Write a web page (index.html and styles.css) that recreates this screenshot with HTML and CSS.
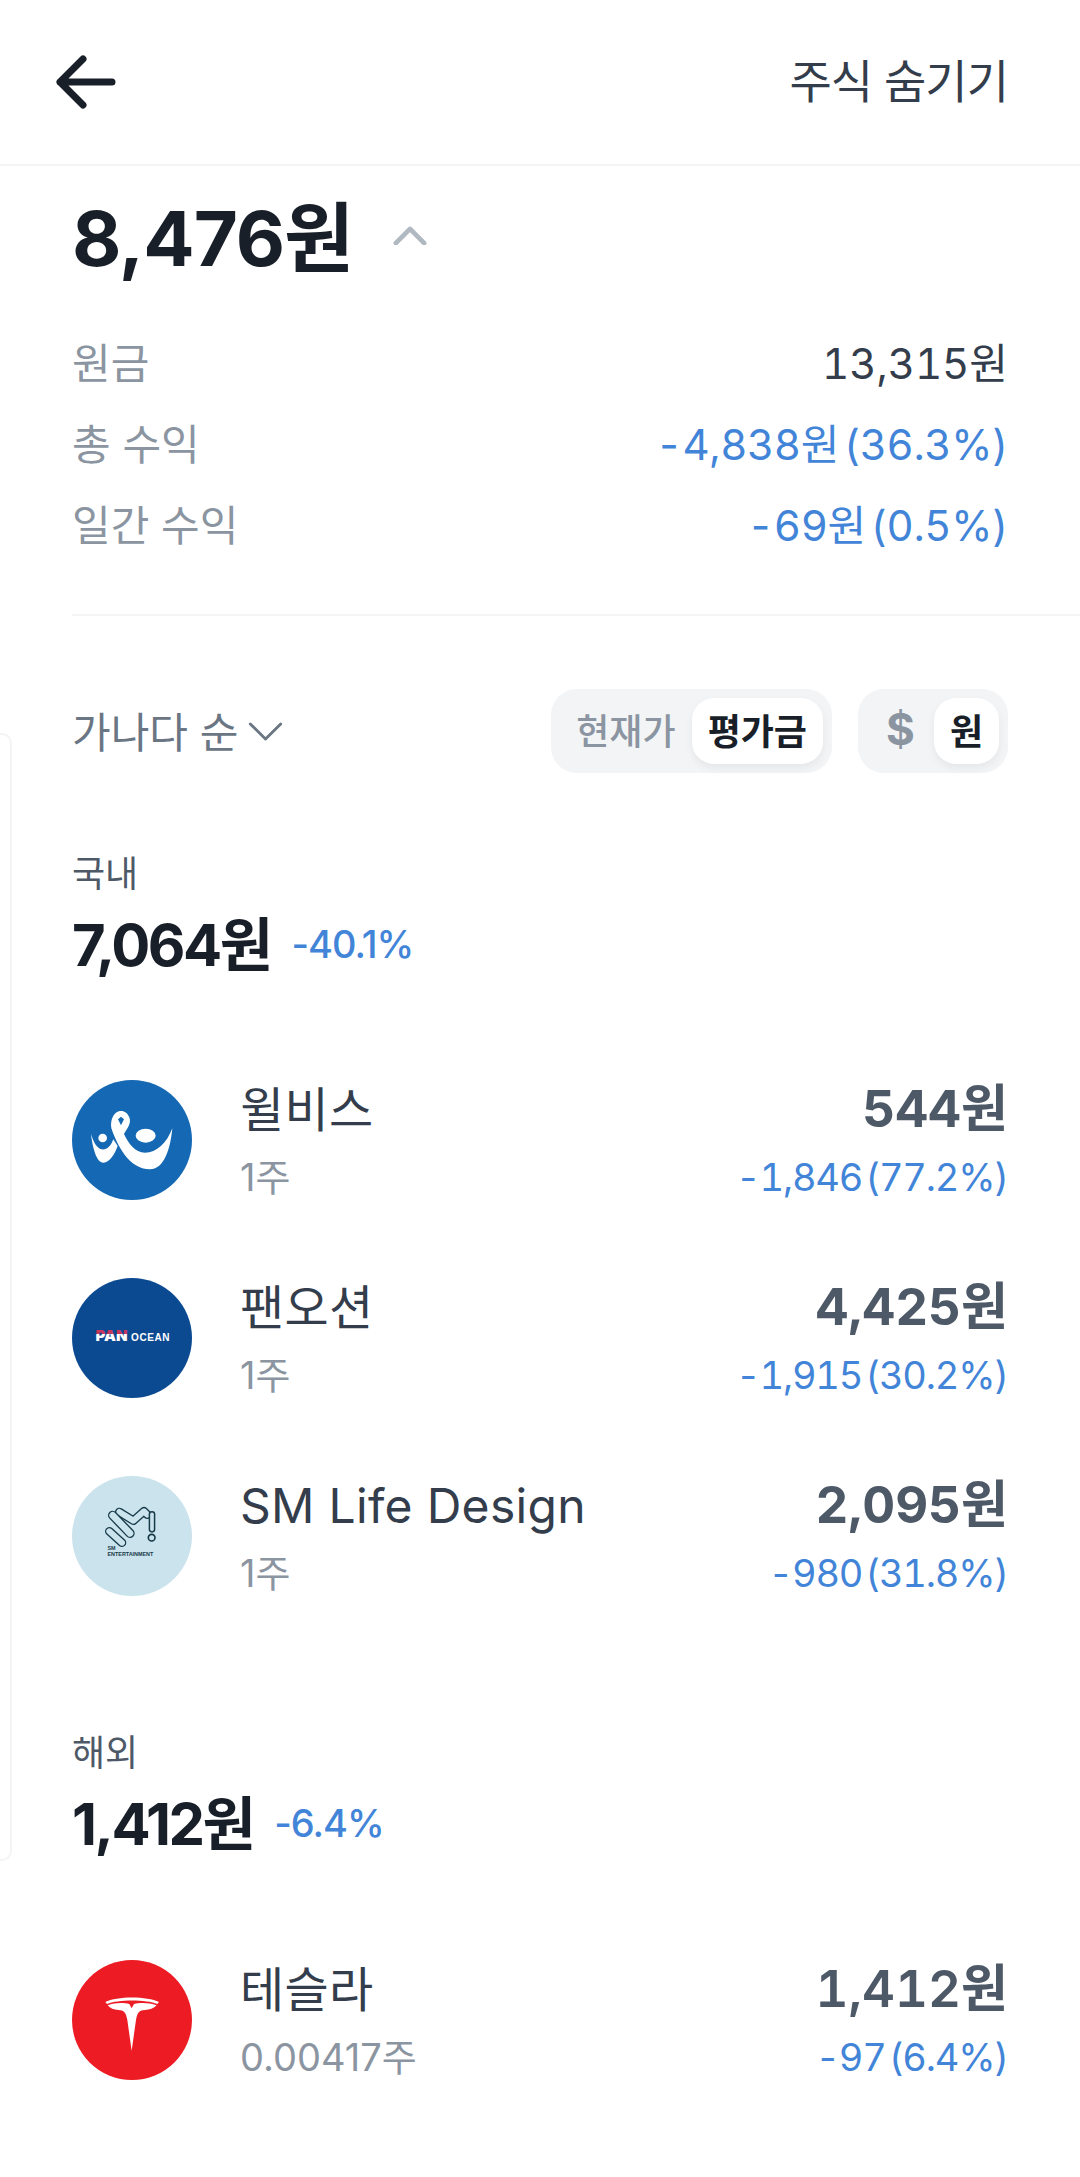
FILE: index.html
```html
<!DOCTYPE html>
<html lang="ko">
<head>
    <meta charset="UTF-8">
    <meta name="viewport" content="width=device-width, initial-scale=1.0">
    <title>주식 숨기기</title>
    <link rel="stylesheet" href="styles.css">
</head>
<body>

<div class="side-card"></div>

<header class="top-bar">
    <svg class="back-icon" viewBox="0 0 60 54" width="60" height="54">
        <path d="M27 4 L4 27 L27 50 M4 27 H56" fill="none" stroke="#191f28" stroke-width="7" stroke-linecap="round" stroke-linejoin="round"/>
    </svg>
    <span class="hide-link">주식 숨기기</span>
</header>

<section class="summary">
    <div class="total-row">
        <span class="total">8,476원</span>
        <svg class="up-icon" viewBox="0 0 36 20" width="34" height="19">
            <path d="M3 18 L18 3 L33 18" fill="none" stroke="#b0b8c1" stroke-width="5" stroke-linecap="round" stroke-linejoin="round"/>
        </svg>
    </div>
    <div class="summary-row">
        <span class="summary-label">원금</span>
        <span class="summary-value">13,315원</span>
    </div>
    <div class="summary-row">
        <span class="summary-label">총 수익</span>
        <span class="summary-value blue">-4,838원 (36.3%)</span>
    </div>
    <div class="summary-row">
        <span class="summary-label">일간 수익</span>
        <span class="summary-value blue">-69원 (0.5%)</span>
    </div>
</section>

<hr class="divider">

<div class="sort-bar">
    <div class="sort-select">
        <span class="sort-text">가나다 순</span>
        <svg viewBox="0 0 36 20" width="35" height="19">
            <path d="M2 2 L18 18 L34 2" fill="none" stroke="#6b7684" stroke-width="3" stroke-linecap="round" stroke-linejoin="round"/>
        </svg>
    </div>
    <div class="toggles">
        <div class="toggle">
            <span class="toggle-item">현재가</span>
            <span class="toggle-item active">평가금</span>
        </div>
        <div class="toggle">
            <span class="toggle-item dollar">$</span>
            <span class="toggle-item active won">원</span>
        </div>
    </div>
</div>

<section class="group">
    <div class="group-label">국내</div>
    <div class="group-head">
        <span class="group-value">7,064원</span>
        <span class="group-rate">-40.1%</span>
    </div>

    <div class="stock">
        <svg class="logo" viewBox="0 0 120 120">
            <circle cx="60" cy="60" r="60" fill="#1569b4"/>
            <g transform="translate(-22 -20) scale(.3333)" fill="#fff">
                <path d="M213 153 C190 153 178 185 186 210 C200 250 235 328 300 328 C345 328 362 260 367 205 C350 250 320 278 285 278 C255 278 235 250 222 222 C232 205 245 190 238 172 C233 160 225 153 213 153 Z"/>
                <path d="M213 170 L222 178 L213 196 L204 178 Z" fill="#1569b4"/>
                <path d="M123 222 C128 265 140 308 160 308 C180 308 195 280 203 258 L190 238 C182 260 170 270 155 268 C140 265 130 245 123 222 Z"/>
                <circle cx="158" cy="234" r="13"/>
                <ellipse cx="287" cy="227" rx="30" ry="21"/>
            </g>
        </svg>
        <div class="stock-info">
            <div class="stock-name">윌비스</div>
            <div class="stock-qty">1주</div>
        </div>
        <div class="stock-price">
            <div class="price strong">544원</div>
            <div class="profit">-1,846 (77.2%)</div>
        </div>
    </div>

    <div class="stock">
        <svg class="logo" viewBox="0 0 120 120">
            <defs>
                <linearGradient id="pan-fill" x1="0" y1="0" x2="0" y2="1">
                    <stop offset="0.42" stop-color="#c9365f"/>
                    <stop offset="0.42" stop-color="#fff"/>
                </linearGradient>
            </defs>
            <circle cx="60" cy="60" r="60" fill="#0b4a91"/>
            <text class="pan-text" x="23.500" y="63" fill="url(#pan-fill)">PAN</text>
            <text class="ocean-text" x="59" y="63" fill="#fff">OCEAN</text>
        </svg>
        <div class="stock-info">
            <div class="stock-name">팬오션</div>
            <div class="stock-qty">1주</div>
        </div>
        <div class="stock-price">
            <div class="price strong">4,425원</div>
            <div class="profit">-1,915 (30.2%)</div>
        </div>
    </div>

    <div class="stock">
        <svg class="logo" viewBox="0 0 120 120">
            <circle cx="60" cy="60" r="60" fill="#cbe3ec"/>
            <g transform="translate(-22 -20) scale(.3333)" fill="none" stroke-linecap="round" stroke-linejoin="round">
                <path d="M208 168 L250 194 L282 166 L292 176" stroke="#173a4a" stroke-width="26"/>
                <path d="M208 168 L250 194 L282 166 L292 176" stroke="#cbe3ec" stroke-width="18"/>
                <path d="M188 178 L240 232" stroke="#173a4a" stroke-width="28"/>
                <path d="M188 178 L240 232" stroke="#cbe3ec" stroke-width="20"/>
                <path d="M178 226 L216 260" stroke="#173a4a" stroke-width="26"/>
                <path d="M178 226 L216 260" stroke="#cbe3ec" stroke-width="18"/>
                <path d="M306 175 V220" stroke="#173a4a" stroke-width="20"/>
                <path d="M306 175 V220" stroke="#cbe3ec" stroke-width="11"/>
                <circle cx="305" cy="245" r="10" stroke="#173a4a" stroke-width="5"/>
            </g>
            <text class="sm-text" x="35.500" y="74">SM</text>
            <text class="sm-text" x="35.500" y="80">ENTERTAINMENT</text>
        </svg>
        <div class="stock-info">
            <div class="stock-name">SM Life Design</div>
            <div class="stock-qty">1주</div>
        </div>
        <div class="stock-price">
            <div class="price strong">2,095원</div>
            <div class="profit">-980 (31.8%)</div>
        </div>
    </div>
</section>

<section class="group second">
    <div class="group-label">해외</div>
    <div class="group-head">
        <span class="group-value">1,412원</span>
        <span class="group-rate">-6.4%</span>
    </div>

    <div class="stock">
        <svg class="logo" viewBox="0 0 120 120">
            <circle cx="60" cy="60" r="60" fill="#ed1c24"/>
            <g transform="translate(-22 -20) scale(.3333)" fill="#fff">
                <path d="M166 186 C200 168 292 168 327 186 L322 192 C290 178 202 178 171 192 Z"/>
                <path d="M173 196 C195 187 222 188 238 192 L245 205 L252 192 C268 188 296 187 320 196 C312 205 298 210 285 210 C268 210 262 218 258 240 L245 332 L232 240 C228 218 222 210 205 210 C192 210 180 205 173 196 Z"/>
            </g>
        </svg>
        <div class="stock-info">
            <div class="stock-name">테슬라</div>
            <div class="stock-qty">0.00417주</div>
        </div>
        <div class="stock-price">
            <div class="price">1,412원</div>
            <div class="profit">-97 (6.4%)</div>
        </div>
    </div>
</section>

</body>
</html>
```

FILE: styles.css
```css
* {
    box-sizing: border-box;
}

body {
    position: relative;
    margin: 0;
    height: 2177px;
    overflow: hidden;
    background-color: #fff;
    color: #191f28;
    font-family: Inter, "Noto Sans CJK KR", sans-serif;
}

/* Card of the previous page peeking in from the left */
.side-card {
    position: absolute;
    left: -12px;
    top: 733px;
    width: 24px;
    height: 1128px;
    border: 2px solid #f2f4f6;
    border-radius: 10px;
}

/* Top bar */
.top-bar {
    display: flex;
    justify-content: space-between;
    align-items: center;
    height: 166px;
    padding: 0 72px 0 56px;
    border-bottom: 2px solid #f2f4f6;
}

.hide-link {
    padding-bottom: 8px;
    font-size: 46px;
    color: #333d4b;
    letter-spacing: -1px;
}

/* Summary */
.summary {
    padding: 0 72px;
}

.total-row {
    display: flex;
    align-items: center;
    gap: 40px;
    height: 134px;
    margin-bottom: 20px;
}

.total {
    font-size: 76px;
    font-weight: 700;
    letter-spacing: -1px;
}

.up-icon {
    margin-top: 4px;
}

.summary-row {
    display: flex;
    justify-content: space-between;
    align-items: center;
    height: 81px;
    font-size: 42px;
}

.summary-label {
    color: #8b95a1;
}

.summary-value {
    color: #333d4b;
    font-variant-numeric: tabular-nums;
    word-spacing: -6px;
}

.blue {
    color: #4285d8;
    letter-spacing: -0.400px;
}

.divider {
    height: 2px;
    margin: 51px 0 0 72px;
    border: none;
    background-color: #f2f4f6;
}

/* Sort bar */
.sort-bar {
    display: flex;
    justify-content: space-between;
    align-items: center;
    margin-top: 73px;
    padding: 0 72px;
}

.sort-select {
    display: flex;
    align-items: center;
    gap: 10px;
    font-size: 42px;
    color: #6b7684;
}

.sort-text {
    padding-bottom: 4px;
}

.toggles {
    display: flex;
    gap: 26px;
}

.toggle {
    display: flex;
    align-items: center;
    height: 84px;
    padding: 0 9px;
    border-radius: 26px;
    background-color: #f2f4f6;
}

.toggle-item {
    display: flex;
    justify-content: center;
    align-items: center;
    height: 66px;
    padding: 0 16px 4px;
    border-radius: 22px;
    font-size: 36px;
    font-weight: 500;
    color: #8b95a1;
}

.toggle-item.active {
    background-color: #fff;
    box-shadow: 0 4px 8px rgba(0, 0, 0, 0.06);
    font-weight: 700;
    color: #191f28;
}

.toggle-item.won {
    width: 65px;
    padding: 0 0 4px;
}

.toggle-item.dollar {
    width: 67px;
    padding: 0 0 4px;
    font-size: 44px;
    font-weight: 700;
}

/* Stock groups */
.group {
    margin-top: 76px;
    padding: 0 72px;
}

.group.second {
    margin-top: 93px;
}

.group-label {
    height: 50px;
    line-height: 50px;
    font-size: 36px;
    color: #4e5968;
}

.group-head {
    display: flex;
    align-items: center;
    gap: 21px;
    height: 72px;
    margin-top: 6px;
    margin-bottom: 64px;
}

.second .group-head {
    margin-bottom: 65px;
}

.group-value {
    font-size: 58px;
    font-weight: 700;
    letter-spacing: -2.500px;
}

.group-rate {
    padding-top: 6px;
    font-size: 38px;
    font-weight: 500;
    color: #4285d8;
    letter-spacing: -1px;
}

.stock {
    display: flex;
    align-items: center;
    height: 198px;
}

.logo {
    flex: none;
    width: 120px;
    height: 120px;
}

.stock-info {
    flex: 1;
    margin-left: 48px;
    padding-top: 5px;
}

.stock-name,
.price {
    height: 68px;
    line-height: 68px;
}

.stock-qty,
.profit {
    height: 68px;
    line-height: 68px;
    font-size: 38px;
}

.stock-name {
    line-height: 70px;
    font-size: 48px;
    color: #333d4b;
    letter-spacing: 0.300px;
}

.stock-qty {
    color: #8b95a1;
}

.stock-price {
    padding-top: 5px;
    text-align: right;
    font-variant-numeric: tabular-nums;
}

.price {
    font-size: 51px;
    font-weight: 600;
    color: #4e5968;
}

.price.strong {
    font-weight: 700;
}

.profit {
    color: #4285d8;
    word-spacing: -6px;
    letter-spacing: -1.200px;
}

/* Small wordmarks inside the logos */
.pan-text {
    font-family: Inter, sans-serif;
    font-size: 15px;
    font-weight: 900;
}

.ocean-text {
    font-family: "Liberation Sans", sans-serif;
    font-size: 10px;
    font-weight: 700;
    letter-spacing: 0.600px;
}

.sm-text {
    font-family: "Liberation Sans", sans-serif;
    font-size: 5.400px;
    font-weight: 700;
    fill: #173a4a;
}
```
